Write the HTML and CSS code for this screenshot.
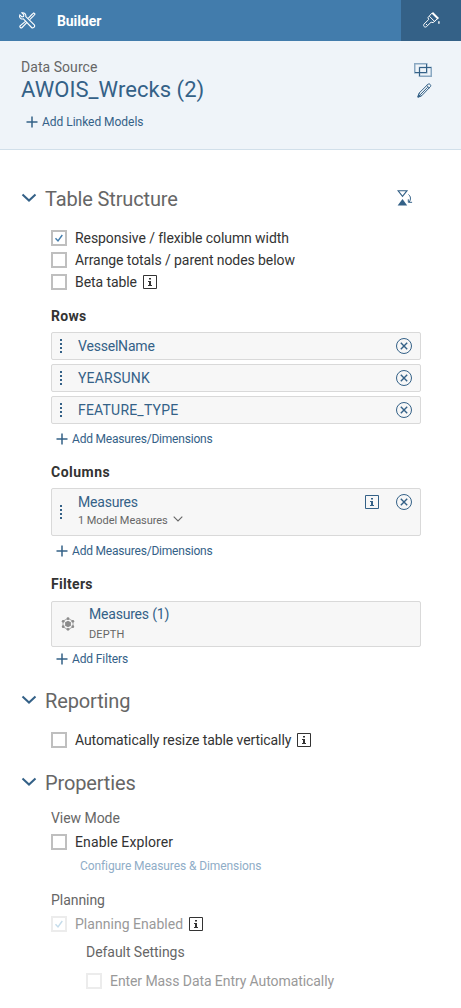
FILE: index.html
```html
<!DOCTYPE html>
<html lang="en">
<head>
<meta charset="utf-8">
<title>Builder</title>
<link rel="stylesheet" href="styles.css">
</head>
<body>
<svg class="defs" width="0" height="0" aria-hidden="true">
  <symbol id="plus" viewBox="0 0 12 12"><path d="M6 .5v11M.5 6h11" fill="none" stroke="currentColor" stroke-width="1.500"/></symbol>
  <symbol id="chevron" viewBox="0 0 16 10"><path d="M1.500 1.500L8 7.600l6.500-6.100" fill="none" stroke="currentColor" stroke-width="2"/></symbol>
  <symbol id="info" viewBox="0 0 14 14"><path d="M.5.500h13v13H.5z" fill="none" stroke="currentColor"/><path d="M6 3h2v1.500H6zM5 6h3v4h1v1H5v-1h1V7H5z" fill="currentColor"/></symbol>
  <symbol id="remove" viewBox="0 0 16 16"><circle cx="8" cy="8" r="7.500" fill="none" stroke="currentColor"/><path d="M4.800 4.800l6.400 6.400M11.200 4.800l-6.400 6.400" fill="none" stroke="currentColor" stroke-width="1.400"/></symbol>
  <symbol id="grip" viewBox="0 0 2 14"><path d="M0 0h2v2H0zM0 4h2v2H0zM0 8h2v2H0zM0 12h2v2H0z" fill="currentColor"/></symbol>
  <symbol id="check" viewBox="0 0 12 12"><path d="M2.500 6.300L5 9l4.300-6" fill="none" stroke="currentColor" stroke-width="1.400"/></symbol>
</svg>

<header class="topbar">
  <svg class="tools" viewBox="0 0 17 17" fill="none" stroke="#fff" stroke-width="1.100"><path d="M2.900.9l2 2-.4 1.600-1.600.4-2-2C.2 4.700.8 6.100 2 6.700c.8.400 1.700.4 2.400.1l8.200 8.700c1.300 1.200 3.900-.8 2.700-2.600L6.800 4.600C7.200 2.600 5.500.2 2.900.9z"/><path d="M9.200 6.300l3.700-3.800 1.900-1.600 1.200 1.200-1.500 1.900-3.800 3.700M6.800 9.100l-5.700 4.700c-.8 1.300.8 2.700 2 1.700l4.900-5.100"/></svg>
  <h1 class="topbar-title">Builder</h1>
  <div class="styling-tab">
    <svg class="brush" viewBox="0 0 17 17" fill="none" stroke="#fff"><path d="M9.300.8l6 6" stroke-width="2"/><path d="M8.800 1.200L5 5.600l.7 1.900-4.800 4.700c-1 1.700.8 3.700 2.500 2.500l4.700-4.500 2 .4 4.500-4M6.500 4.400l5.300 5.300M3 13l1-1"/><path d="M15.900 9.200v2.600" stroke-width="1.400"/></svg>
  </div>
</header>

<section class="source">
  <div class="source-info">
    <div class="source-label">Data Source</div>
    <div class="source-name">AWOIS_Wrecks (2)</div>
    <div class="add add-linked"><svg class="plus"><use href="#plus"/></svg><span>Add Linked Models</span></div>
  </div>
  <div class="source-actions">
    <svg class="blend" viewBox="0 0 18 14" fill="none" stroke="#346187"><path d="M.75.750h12v9H.75z" stroke="#8aa8c2" stroke-width="1.500"/><path d="M5.500 4.500h11.750v8.750H5.500z" stroke="#8aa8c2" stroke-width="1.500"/><path d="M12.500 1v8.500H1M5.500 13V4.500H17"/></svg>
    <svg class="pencil" viewBox="0 0 15 15" fill="none" stroke="#346187"><path d="M1 14l1-3.800L11.200 1c1.200-.8 3.200 1.100 2.400 2.400L4.600 12.800zM2.100 10.300l2.600 2.500M9.700 2.500l2.600 2.500M4 11l6.700-6.800"/><path d="M.8 14.200l.8-2.600 1.800 1.800z" fill="#346187"/></svg>
  </div>
</section>

<main class="content">
  <h2 class="section-title"><svg class="chevron"><use href="#chevron"/></svg><span>Table Structure</span>
    <svg class="hourglass" viewBox="0 0 16 16"><path d="M1 .7h9L5.500 6.300z" fill="none" stroke="#346187" stroke-width="1.100"/><path d="M5.500 9l4.700 6.500H.6z" fill="#346187"/><path d="M11.500 4.500c2.500 2 2.400 4.800.8 7.500M11.300 9.300v3h3.800" fill="none" stroke="#346187"/></svg>
  </h2>
  <div class="options">
    <label class="option"><span class="box"><svg class="tick"><use href="#check"/></svg></span><span>Responsive / flexible column width</span></label>
    <label class="option"><span class="box"></span><span>Arrange totals / parent nodes below</span></label>
    <label class="option"><span class="box"></span><span>Beta table</span><svg class="info"><use href="#info"/></svg></label>
  </div>

  <h3 class="group-title">Rows</h3>
  <div class="cards">
    <div class="card"><svg class="grip"><use href="#grip"/></svg><span class="name">VesselName</span><svg class="remove"><use href="#remove"/></svg></div>
    <div class="card"><svg class="grip"><use href="#grip"/></svg><span class="name caps">YEARSUNK</span><svg class="remove"><use href="#remove"/></svg></div>
    <div class="card"><svg class="grip"><use href="#grip"/></svg><span class="name caps">FEATURE_TYPE</span><svg class="remove"><use href="#remove"/></svg></div>
  </div>
  <div class="add add-item"><svg class="plus"><use href="#plus"/></svg><span>Add Measures/Dimensions</span></div>

  <h3 class="group-title columns-title">Columns</h3>
  <div class="card card-columns">
    <svg class="grip"><use href="#grip"/></svg>
    <div class="name">
      <div class="name-line">Measures</div>
      <div class="detail"><span>1 Model Measures</span><svg class="small-chevron" viewBox="0 0 10 6"><path d="M.7.700L5 5l4.300-4.300" fill="none" stroke="#666" stroke-width="1.100"/></svg></div>
    </div>
    <svg class="info card-info"><use href="#info"/></svg>
    <svg class="remove"><use href="#remove"/></svg>
  </div>
  <div class="add add-item"><svg class="plus"><use href="#plus"/></svg><span>Add Measures/Dimensions</span></div>

  <h3 class="group-title">Filters</h3>
  <div class="card card-filter">
    <svg class="measure" viewBox="0 0 14 14"><path d="M7 1.300l5 2.900v5.600l-5 2.900-5-2.900V4.200z" fill="none" stroke="#a8a8a8"/><g fill="#8b8b8b"><path d="M7 3.700l2.900 1.600v3.400L7 10.300 4.100 8.700V5.300z"/><circle cx="7" cy="1.700" r="1.400"/><circle cx="7" cy="12.300" r="1.400"/><circle cx="2.200" cy="4.300" r="1.400"/><circle cx="11.800" cy="4.300" r="1.400"/><circle cx="2.200" cy="9.700" r="1.400"/><circle cx="11.800" cy="9.700" r="1.400"/></g></svg>
    <div class="name">
      <div class="name-line">Measures (1)</div>
      <div class="detail caps">DEPTH</div>
    </div>
  </div>
  <div class="add add-item add-filter"><svg class="plus"><use href="#plus"/></svg><span>Add Filters</span></div>

  <h2 class="section-title"><svg class="chevron"><use href="#chevron"/></svg><span>Reporting</span></h2>
  <div class="options">
    <label class="option"><span class="box"></span><span>Automatically resize table vertically</span><svg class="info"><use href="#info"/></svg></label>
  </div>

  <h2 class="section-title"><svg class="chevron"><use href="#chevron"/></svg><span>Properties</span></h2>
  <h4 class="sub-title">View Mode</h4>
  <label class="option explorer"><span class="box"></span><span>Enable Explorer</span></label>
  <div class="configure">Configure Measures &amp; Dimensions</div>
  <h4 class="sub-title">Planning</h4>
  <label class="option disabled planning"><span class="box"><svg class="tick"><use href="#check"/></svg></span><span>Planning Enabled</span><svg class="info"><use href="#info"/></svg></label>
  <div class="defaults">
    <h4 class="sub-title">Default Settings</h4>
    <label class="option disabled"><span class="box"></span><span>Enter Mass Data Entry Automatically</span></label>
  </div>
</main>
</body>
</html>
```
FILE: styles.css
```css
* { box-sizing: border-box; }
body {
  margin: 0;
  height: 1008px;
  overflow: hidden;
  background: #fff;
  color: #333;
  font: 14px/20px Roboto, "Liberation Sans", sans-serif;
  letter-spacing: -0.08px;
  white-space: nowrap;
}
h1, h2, h3, h4 { margin: 0; font-weight: 400; }
svg { display: block; flex: none; }
.defs { position: absolute; }

.topbar { display: flex; align-items: center; height: 41px; padding-left: 19px; background: #427cac; }
.tools { width: 17px; height: 17px; margin-right: 21px; }
.topbar-title { color: #fff; font-size: 14px; font-weight: 700; line-height: 20px; }
.styling-tab { display: flex; align-items: center; width: 60px; height: 41px; margin-left: auto; padding-left: 22px; background: #346187; }
.brush { width: 17px; height: 17px; }

.source { display: flex; justify-content: space-between; height: 109px; padding: 16px 29px 0 21px; background: #eff4f9; border-bottom: 1px solid #d1dfea; }
.source-label { color: #666; line-height: 20px; letter-spacing: 0.05px; }
.source-name { margin-top: -1px; color: #346187; font-size: 22px; line-height: 28px; letter-spacing: 0.05px; }
.add { display: flex; align-items: center; height: 20px; color: #346187; font-size: 12px; letter-spacing: -0.2px; }
.plus { width: 12px; height: 12px; margin-right: 4px; }
.add-linked { margin: 8px 0 0 5px; letter-spacing: -0.03px; }
.source-actions { padding-top: 6px; }
.blend { width: 18px; height: 14px; }
.pencil { width: 15px; height: 15px; margin: 6px 0 0 3px; }

.content { padding: 38px 40px 0 51px; }
.section-title { display: flex; align-items: center; height: 22px; margin: 0 0 17px -30px; color: #666; font-size: 20px; line-height: 22px; letter-spacing: -0.14px; }
.chevron { width: 16px; height: 10px; margin: -2px 8px 0 0; color: #346187; }
.hourglass { width: 16px; height: 16px; margin: -2px 8px 0 auto; }
.option { display: flex; align-items: center; height: 22px; color: #333; }
.box { display: flex; flex: none; width: 16px; height: 16px; margin-right: 8px; align-items: center; justify-content: center; border: 2px solid #bfbfbf; background: #fff; }
.tick { width: 12px; height: 12px; color: #427cac; }
.info { width: 14px; height: 14px; margin-left: 6px; color: #333; }
.group-title { height: 20px; margin: 13px 0 6px; font-size: 14px; font-weight: 700; letter-spacing: 0.3px; }
.columns-title { letter-spacing: 0.5px; }
.cards { display: flex; flex-direction: column; gap: 4px; }
.card { display: flex; align-items: center; height: 28px; padding: 0 8px; color: #346187; background: #f7f7f7; border: 1px solid #d9d9d9; border-radius: 2px; }
.grip { width: 2px; height: 14px; margin-right: 16px; }
.name { letter-spacing: -0.2px; }
.caps { letter-spacing: 0.2px; }
.remove { width: 16px; height: 16px; margin-left: auto; }
.add-item { margin: 5px 0 0 5px; }
.card-columns { height: 48px; }
.card-columns .name { margin-top: -3px; }
.card-columns .remove { align-self: flex-start; margin: 5px 0 0 17px; }
.card-info { align-self: flex-start; margin: 6px 0 0 auto; color: #346187; }
.name-line { height: 20px; }
.detail { display: flex; height: 17px; color: #666; font-size: 11px; line-height: 18px; letter-spacing: -0.05px; }
.small-chevron { width: 10px; height: 6px; margin: 4px 0 0 5px; }
.card-filter { height: 46px; margin-top: 7px; padding-left: 9px; }
.measure { width: 14px; height: 14px; margin-right: 14px; }
.card-filter .detail { height: 20px; line-height: 21px; letter-spacing: 0.15px; }
.add-filter { margin: 2px 0 21px 5px; letter-spacing: -0.12px; }
.options + .section-title { margin-top: 21px; margin-bottom: 14px; }
.sub-title { height: 20px; margin-bottom: 3px; color: #666; font-size: 14px; letter-spacing: -0.05px; }
.explorer { letter-spacing: 0.12px; }
.planning { letter-spacing: 0.03px; }
.configure { height: 20px; margin: 3px 0 14px 29px; color: #8fadc7; font-size: 12px; letter-spacing: -0.09px; }
.disabled { color: #999; }
.disabled .box { border-color: #ececec; }
.disabled .tick { color: #c5dceb; }
.defaults { margin: 7px 0 0 35px; }
.defaults .sub-title { margin-bottom: 8px; }
```
